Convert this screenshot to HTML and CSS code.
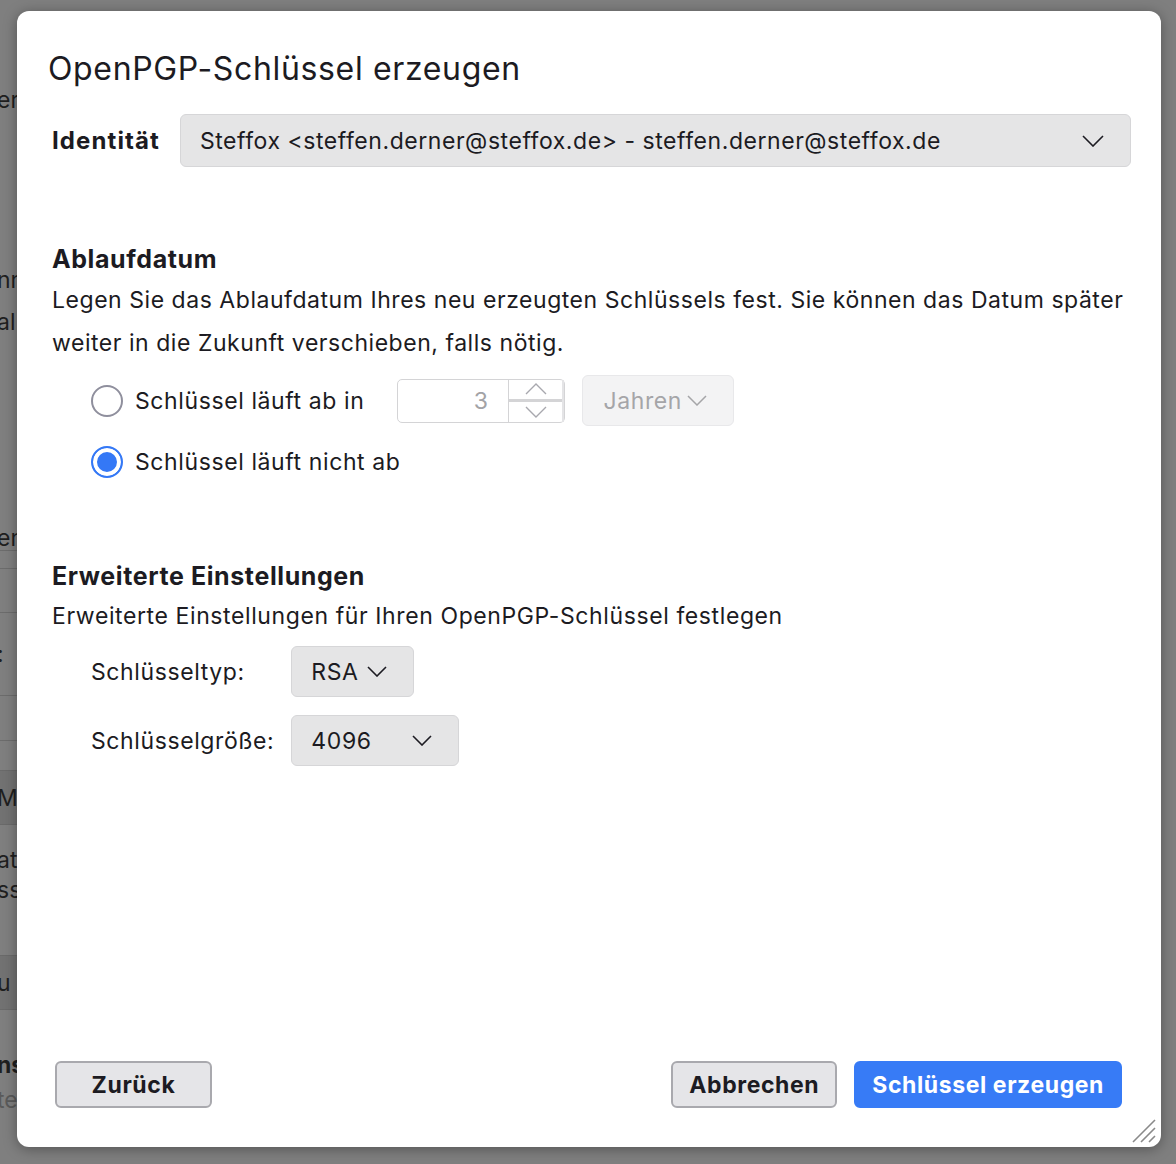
FILE: index.html
```html
<!DOCTYPE html>
<html lang="de">
<head>
  <meta charset="UTF-8">
  <title>OpenPGP-Schlüssel erzeugen</title>
  <link rel="stylesheet" href="styles.css">
</head>
<body>

  <!-- the dimmed window behind the dialog -->
  <div class="backdrop">
    <div class="bg-row" style="height: 88px"></div>
    <div class="bg-row bg-text" style="height: 24px">er</div>
    <div class="bg-row" style="height: 156px"></div>
    <div class="bg-row bg-text" style="height: 24px">nn</div>
    <div class="bg-row" style="height: 18px"></div>
    <div class="bg-row bg-text" style="height: 24px">al</div>
    <div class="bg-row" style="height: 192px"></div>
    <div class="bg-row bg-text" style="height: 24px">en</div>
    <div class="bg-row bg-line" style="height: 18px"></div>
    <div class="bg-row bg-line" style="height: 44px"></div>
    <div class="bg-row bg-line bg-text" style="height: 83px">:</div>
    <div class="bg-row bg-line" style="height: 45px"></div>
    <div class="bg-row bg-line" style="height: 30px"></div>
    <div class="bg-row bg-band bg-text" style="height: 55px">MI</div>
    <div class="bg-row bg-text bg-two" style="height: 130px">at<br>ss</div>
    <div class="bg-row bg-band bg-text" style="height: 55px">u</div>
    <div class="bg-row" style="height: 40px"></div>
    <div class="bg-row bg-text bg-bold" style="height: 30px">ns</div>
    <div class="bg-row bg-text bg-light" style="height: 40px">te</div>
  </div>

  <div class="dialog">
    <div class="title">OpenPGP-Schlüssel erzeugen</div>

    <div class="identity-row">
      <div class="identity-label">Identität</div>
      <div class="select identity-select">
        <span>Steffox &lt;steffen.derner@steffox.de&gt; - steffen.derner@steffox.de</span>
        <svg class="chevron" width="22" height="12" viewBox="0 0 22 12"><path d="M1 1 L11 11 L21 1" fill="none" stroke="#1c1b22" stroke-width="1.6"/></svg>
      </div>
    </div>

    <div class="section expiry">
      <div class="heading">Ablaufdatum</div>
      <p class="desc">Legen Sie das Ablaufdatum Ihres neu erzeugten Schlüssels fest. Sie können das Datum später weiter in die Zukunft verschieben, falls nötig.</p>

      <div class="radio-row">
        <span class="radio"></span>
        <span class="radio-label">Schlüssel läuft ab in</span>
        <div class="spinner">
          <div class="spinner-value">3</div>
          <div class="spinner-btns">
            <div class="spin-btn">
              <svg width="22" height="12" viewBox="0 0 22 12"><path d="M1 11 L11 1 L21 11" fill="none" stroke="#a8a8ae" stroke-width="1.4"/></svg>
            </div>
            <div class="spin-btn">
              <svg width="22" height="12" viewBox="0 0 22 12"><path d="M1 1 L11 11 L21 1" fill="none" stroke="#a8a8ae" stroke-width="1.4"/></svg>
            </div>
          </div>
        </div>
        <div class="select unit-select">
          <span>Jahren</span>
          <svg width="20" height="11" viewBox="0 0 20 11"><path d="M1 1 L10 10 L19 1" fill="none" stroke="#a5a5a8" stroke-width="1.5"/></svg>
        </div>
      </div>

      <div class="radio-row">
        <span class="radio checked"></span>
        <span class="radio-label">Schlüssel läuft nicht ab</span>
      </div>
    </div>

    <div class="section advanced">
      <div class="heading">Erweiterte Einstellungen</div>
      <div class="subtitle">Erweiterte Einstellungen für Ihren OpenPGP-Schlüssel festlegen</div>

      <div class="settings-grid">
        <div class="setting-label">Schlüsseltyp:</div>
        <div>
          <div class="select small-select">
            <span>RSA</span>
            <svg width="20" height="11" viewBox="0 0 20 11"><path d="M1 1 L10 10 L19 1" fill="none" stroke="#1c1b22" stroke-width="1.6"/></svg>
          </div>
        </div>
        <div class="setting-label">Schlüsselgröße:</div>
        <div>
          <div class="select small-select size-select">
            <span>4096</span>
            <svg width="20" height="11" viewBox="0 0 20 11"><path d="M1 1 L10 10 L19 1" fill="none" stroke="#1c1b22" stroke-width="1.6"/></svg>
          </div>
        </div>
      </div>
    </div>

    <div class="footer">
      <button class="btn btn-back">Zurück</button>
      <div class="footer-right">
        <button class="btn">Abbrechen</button>
        <button class="btn btn-primary">Schlüssel erzeugen</button>
      </div>
    </div>

    <svg class="grip" width="26" height="26" viewBox="0 0 26 26">
      <path d="M25 3 L3 25 M25 11 L11 25 M25 19 L19 25" stroke="#8a8a8a" stroke-width="1.6" fill="none"/>
    </svg>
  </div>

</body>
</html>
```

FILE: styles.css
```css
body {
  margin: 0;
  height: 1164px;
  overflow: hidden;
  background-color: #7f7f7f;
  font-family: Inter, 'Noto Sans', sans-serif;
  letter-spacing: 0.6px;
  color: #1c1b22;
  position: relative;
}
.backdrop {
  display: flex;
  flex-direction: column;
  width: 60px;
}
.bg-row {
  font-size: 23px;
  color: #1f1f1f;
  margin-left: -3px;
  letter-spacing: 0;
}
.bg-text {
  display: flex;
  align-items: center;
}
.bg-line {
  border-top: 1px solid #6c6c6c;
  box-sizing: border-box;
}
.bg-band {
  background-color: #727272;
  border-top: 1px solid #6a6a6a;
  border-bottom: 1px solid #6a6a6a;
  box-sizing: border-box;
}
.bg-two {
  line-height: 30px;
  align-items: flex-start;
  padding-top: 20px;
  box-sizing: border-box;
}
.bg-bold {
  font-weight: 700;
}
.bg-light {
  color: #5a5a5a;
}

.dialog {
  position: absolute;
  left: 17px;
  top: 11px;
  width: 1144px;
  height: 1136px;
  box-sizing: border-box;
  background-color: #fff;
  border-radius: 12px;
  box-shadow: 0 2px 14px rgba(0, 0, 0, 0.35);
  padding: 38px 30px 39px 35px;
  display: flex;
  flex-direction: column;
}
.title {
  font-size: 32px;
  line-height: 40px;
  margin-left: -4px;
  letter-spacing: 0.65px;
}
.identity-row {
  display: flex;
  align-items: center;
  margin-top: 25px;
}
.identity-label {
  font-size: 24px;
  font-weight: 700;
  letter-spacing: 1.1px;
  margin-right: 20px;
}
.select {
  display: flex;
  align-items: center;
  justify-content: space-between;
  box-sizing: border-box;
  background-color: #e5e5e6;
  border: 1px solid #d6d6d8;
  border-radius: 6px;
  font-size: 23px;
}
.identity-select {
  flex: 1;
  height: 53px;
  padding: 0 26px 0 19px;
  letter-spacing: 0.55px;
}
.section {
  display: flex;
  flex-direction: column;
}
.expiry {
  margin-top: 77px;
}
.heading {
  font-size: 25px;
  line-height: 30px;
  font-weight: 700;
}
.desc {
  margin: 5px 0 10px;
  font-size: 23px;
  line-height: 43px;
  letter-spacing: 0.54px;
}
.radio-row {
  display: flex;
  align-items: center;
  height: 51px;
  margin-left: 39px;
  margin-bottom: 10px;
}
.radio {
  width: 32px;
  height: 32px;
  box-sizing: border-box;
  border: 2px solid #8f8f9d;
  border-radius: 50%;
  margin-right: 12px;
}
.radio.checked {
  border: 2px solid #3478f6;
  background-color: #3478f6;
  box-shadow: inset 0 0 0 4px #fff;
}
.radio-label {
  font-size: 23px;
}
.spinner {
  display: flex;
  width: 168px;
  height: 44px;
  box-sizing: border-box;
  border: 1px solid #d4d4d6;
  border-radius: 5px;
  margin-left: 33px;
}
.spinner-value {
  flex: 1;
  display: flex;
  align-items: center;
  justify-content: flex-end;
  padding-right: 20px;
  font-size: 23px;
  color: #a3a3a6;
  border-right: 1px solid #d4d4d6;
}
.spinner-btns {
  width: 53px;
  display: flex;
  flex-direction: column;
  border-right: 2px solid #e4e4e6;
}
.spin-btn {
  flex: 1;
  display: flex;
  align-items: center;
  justify-content: center;
}
.spin-btn + .spin-btn {
  border-top: 3px solid #d4d4d6;
}
.unit-select {
  height: 51px;
  margin-left: 17px;
  padding: 0 26px 0 20px;
  gap: 5px;
  background-color: #f3f3f4;
  border-color: #e8e8ea;
  color: #a5a5a8;
}
.advanced {
  margin-top: 64px;
}
.subtitle {
  font-size: 23px;
  line-height: 30px;
  margin-top: 10px;
}
.settings-grid {
  display: grid;
  grid-template-columns: auto auto;
  justify-content: start;
  align-items: center;
  column-gap: 17px;
  row-gap: 18px;
  margin-top: 15px;
  margin-left: 39px;
}
.setting-label {
  font-size: 23px;
}
.small-select {
  display: inline-flex;
  height: 51px;
  padding: 0 26px 0 19px;
  gap: 8px;
  font-size: 23px;
}
.size-select {
  width: 168px;
}
.footer {
  margin-top: auto;
  display: flex;
  justify-content: space-between;
  align-items: center;
  padding: 0 9px 0 3px;
}
.footer-right {
  display: flex;
  gap: 17px;
}
.btn {
  height: 47px;
  box-sizing: border-box;
  padding: 0 16px;
  border: 2px solid #a9a9ae;
  border-radius: 6px;
  background-color: #e5e5e8;
  font-family: Inter, 'Noto Sans', sans-serif;
  font-size: 23px;
  font-weight: 700;
  letter-spacing: 0.6px;
  color: #1c1b22;
}
.btn-back {
  width: 157px;
}
.btn-primary {
  background-color: #377bf6;
  border-color: #377bf6;
  color: #fff;
}
.grip {
  position: absolute;
  right: 5px;
  bottom: 4px;
}
```
